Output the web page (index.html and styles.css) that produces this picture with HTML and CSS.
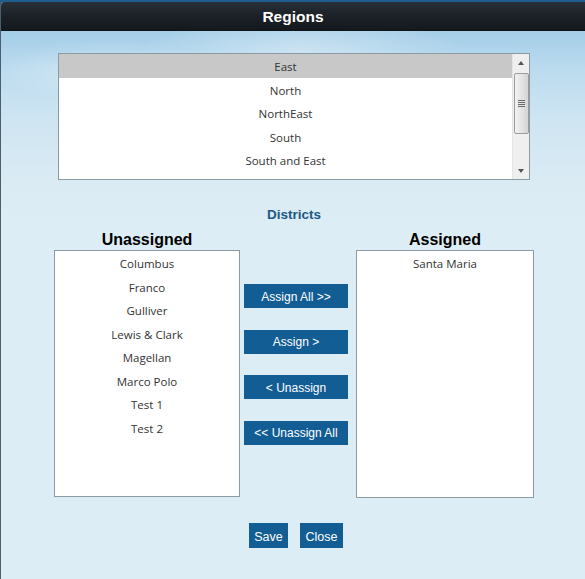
FILE: index.html
```html
<!DOCTYPE html>
<html>
<head>
<meta charset="utf-8">
<link rel="stylesheet" href="styles.css">
</head>
<body>
<div class="window">
  <div class="titlebar">Regions</div>
  <div class="content">
    <div class="regions">
      <div class="rows">
        <div class="row selected">East</div>
        <div class="row">North</div>
        <div class="row">NorthEast</div>
        <div class="row">South</div>
        <div class="row">South and East</div>
      </div>
      <div class="scrollbar">
        <div class="arrow up"></div>
        <div class="thumb"><span class="grip"></span></div>
        <div class="arrow down"></div>
      </div>
    </div>
    <div class="districts">Districts</div>
    <div class="columns">
      <div class="col col-left">
        <div class="col-head">Unassigned</div>
        <div class="list">
          <div class="item">Columbus</div>
          <div class="item">Franco</div>
          <div class="item">Gulliver</div>
          <div class="item">Lewis &amp; Clark</div>
          <div class="item">Magellan</div>
          <div class="item">Marco Polo</div>
          <div class="item">Test 1</div>
          <div class="item">Test 2</div>
        </div>
      </div>
      <div class="actions">
        <button class="btn act">Assign All &gt;&gt;</button>
        <button class="btn act">Assign &gt;</button>
        <button class="btn act">&lt; Unassign</button>
        <button class="btn act">&lt;&lt; Unassign All</button>
      </div>
      <div class="col col-right">
        <div class="col-head">Assigned</div>
        <div class="list list-right">
          <div class="item">Santa Maria</div>
        </div>
      </div>
    </div>
    <div class="footer">
      <button class="btn foot save">Save</button>
      <button class="btn foot close">Close</button>
    </div>
  </div>
</div>
</body>
</html>
```

FILE: styles.css
```css
* { box-sizing: border-box; }
html, body { margin: 0; padding: 0; }
body {
  width: 585px;
  height: 579px;
  overflow: hidden;
  background: #1f5f8f;
}
.window {
  margin-top: 2px;
  width: 585px;
  height: 577px;
  display: flex;
  flex-direction: column;
  border-left: 1px solid #4a5f6f;
  border-top-left-radius: 4px;
  overflow: hidden;
  background: #ddedf5;
}
.titlebar {
  height: 29px;
  flex: none;
  background: linear-gradient(to bottom, #2a3038 0%, #1c2228 45%, #15191e 100%);
  color: #ffffff;
  font-family: "Liberation Sans", Arial, sans-serif;
  font-weight: bold;
  font-size: 15.5px;
  line-height: 29px;
  text-align: center;
  border-bottom: 1px solid #0f1418;
}
.content {
  flex: 1;
  display: flex;
  flex-direction: column;
  background:
    radial-gradient(ellipse 160px 40px at 300px 20px, rgba(255,255,255,0.35), rgba(255,255,255,0) 100%),
    radial-gradient(ellipse 120px 30px at 110px 40px, rgba(255,255,255,0.3), rgba(255,255,255,0) 100%),
    linear-gradient(to bottom, #a4cde8 0px, #bcdcef 40px, #cfe5f2 90px, #daebf4 150px, #ddedf5 200px);
}
.regions {
  margin: 22px 0 0 57px;
  width: 472px;
  height: 127px;
  border: 1px solid #8c9aa4;
  background: #ffffff;
  display: flex;
}
.rows {
  flex: 1;
}
.row, .item {
  height: 23.5px;
  line-height: 25px;
  text-align: center;
  font-family: "Open Sans", "Noto Sans", sans-serif;
  font-size: 11.5px;
  color: #333333;
}
.row.selected { background: #c8c8c8; }
.scrollbar {
  width: 17px;
  flex: none;
  background: #efefef;
  border-left: 1px solid #e4e4e4;
  display: flex;
  flex-direction: column;
  align-items: center;
}
.arrow {
  height: 17px;
  width: 17px;
  display: flex;
  align-items: center;
  justify-content: center;
}
.arrow::before {
  content: "";
  width: 0; height: 0;
  border-left: 3.5px solid transparent;
  border-right: 3.5px solid transparent;
}
.arrow.up::before { border-bottom: 4px solid #555; }
.arrow.down::before { border-top: 4px solid #555; }
.arrow.down { margin-top: auto; }
.thumb {
  margin-top: 2px;
  width: 15px;
  height: 61px;
  border: 1px solid #9c9c9c;
  border-radius: 2px;
  background: linear-gradient(to right, #f2f2f2, #e4e4e4 50%, #d4d4d4);
  display: flex;
  align-items: center;
  justify-content: center;
}
.grip {
  width: 7px;
  height: 7px;
  background: repeating-linear-gradient(to bottom, #6a6a6a 0, #6a6a6a 1px, transparent 1px, transparent 2px);
}
.districts {
  margin-top: 27px;
  text-align: center;
  font-family: "Liberation Sans", Arial, sans-serif;
  font-weight: bold;
  font-size: 13.5px;
  line-height: 16px;
  color: #1b5885;
  padding-left: 2px;
}
.columns {
  margin-top: 7px;
  padding-left: 53px;
  display: flex;
  align-items: flex-start;
}
.col-left { width: 186px; }
.col-right { width: 178px; }
.col-head {
  height: 20px;
  line-height: 20px;
  text-align: center;
  font-family: "Liberation Sans", Arial, sans-serif;
  font-weight: bold;
  font-size: 16px;
  color: #000000;
}
.list {
  height: 247px;
  border: 1px solid #8c9aa4;
  background: #ffffff;
}
.list-right { height: 248px; }
.actions {
  width: 104px;
  margin: 0 8px 0 4px;
  padding-top: 54px;
  display: flex;
  flex-direction: column;
  gap: 21.5px;
}
.btn {
  border: none;
  margin: 0;
  padding: 0;
  background: #135d95;
  color: #ffffff;
  font-family: "Liberation Sans", Arial, sans-serif;
  font-size: 12px;
  text-align: center;
}
.btn.act {
  width: 104px;
  height: 24px;
  padding-top: 1px;
}
.footer {
  margin-top: 25px;
  display: flex;
  gap: 12px;
  padding-left: 248px;
}
.btn.foot {
  height: 25px;
  padding-top: 3px;
  font-size: 12.5px;
}
.btn.save { width: 39px; }
.btn.close { width: 43px; }
```
